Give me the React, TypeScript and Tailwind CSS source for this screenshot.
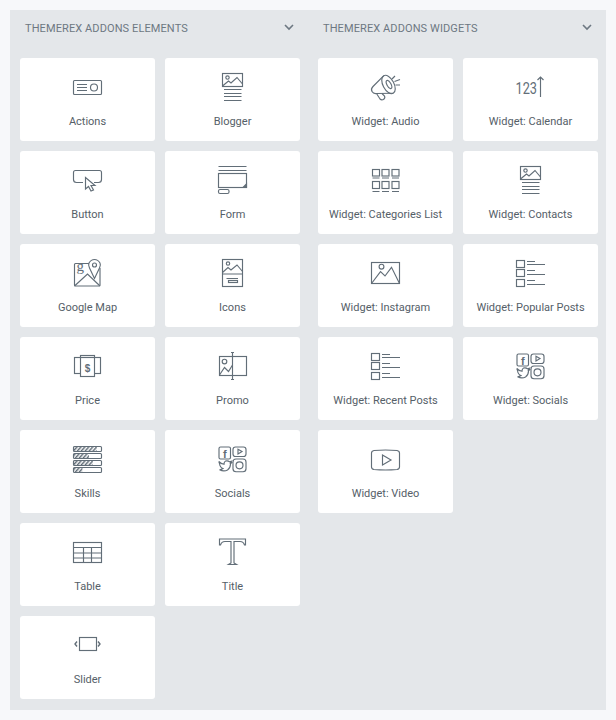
import type { ReactNode } from "react";

const stroke = "#626e78";

function Svg({ children }: { children: ReactNode }) {
  return (
    <svg width="41" height="40" viewBox="0 0 41 40" fill="none" stroke={stroke} strokeWidth="1.15">
      {children}
    </svg>
  );
}

function Lines({ ys, x1, x2 }: { ys: number[]; x1: number; x2: number }) {
  return (
    <path d={ys.map((y) => `M${x1} ${y}H${x2}`).join("")} />
  );
}

const IconActions = () => (
  <Svg>
    <rect x="6.5" y="13.5" width="28" height="14" rx="1" />
    <Lines ys={[17.5, 20.5, 23.5]} x1={10} x2={20} />
    <circle cx="27" cy="20.5" r="3.5" />
  </Svg>
);

const IconPictureText = () => (
  <Svg>
    <rect x="10.5" y="6.5" width="20" height="13" />
    <circle cx="15.5" cy="10.5" r="1.7" />
    <path d="M10.5 19L16.5 14L19 16L25 10.5L30.5 17" />
    <Lines ys={[22.5, 26.5, 29.5, 33.5]} x1={12} x2={29.5} />
  </Svg>
);

const IconButton = () => (
  <Svg>
    <path d="M16 22.5H9.5Q6.5 22.5 6.5 19.5V12.5Q6.5 10.5 8.5 10.5H32.5Q34.5 10.5 34.5 12.5V19.5Q34.5 22.5 31.5 22.5H27" />
    <path d="M18.5 17.5V29L21.5 26.5L24 31L26.5 30L24 25.5H28Z" />
  </Svg>
);

const IconForm = () => (
  <Svg>
    <Lines ys={[6.5, 10.5]} x1={6.5} x2={34.5} />
    <rect x="6.5" y="13.5" width="28" height="14" />
    <path d="M34.5 24V27.5H31Z" fill={stroke} />
    <rect x="6.5" y="29.5" width="10.5" height="4" rx="1.5" />
  </Svg>
);

const IconMap = () => (
  <Svg>
    <path d="M22 10.5H8.5Q7.5 10.5 7.5 11.5V32Q7.5 33 8.5 33H32Q33 33 33 32V15" />
    <path d="M7.5 33L20.5 21L33 33" />
    <path d="M27.5 25.5L22.5 15Q21 12 22 10Q24 6.5 27.5 6.5Q31 6.5 33 10Q34 12 32.5 15Z" fill="#fff" />
    <circle cx="27.5" cy="12" r="2" />
    <text x="9.5" y="18" fontFamily="'Liberation Serif', serif" fontSize="15" fill={stroke} stroke="none">g</text>
  </Svg>
);

const IconIcons = () => (
  <Svg>
    <rect x="10.5" y="6.5" width="20" height="27" />
    <circle cx="16" cy="10.5" r="1.7" />
    <path d="M10.5 19.5L16 14.5L19 17L25 12L30.5 18.5" />
    <path d="M10.5 21H30.5M14.5 25.5H26" />
    <rect x="16.5" y="27.5" width="9" height="2" />
  </Svg>
);

const IconPrice = () => (
  <Svg>
    <rect x="7.5" y="11.5" width="26" height="16" />
    <rect x="13.5" y="9.5" width="14" height="21" fill="#fff" />
    <path d="M13.5 11.5H27.5" />
    <text x="20.5" y="26" textAnchor="middle" fontFamily="'Liberation Sans', sans-serif" fontSize="10" fontWeight="700" fill={stroke} stroke="none">$</text>
  </Svg>
);

const IconPromo = () => (
  <Svg>
    <rect x="7.5" y="10.5" width="27" height="19" />
    <circle cx="12.5" cy="15.5" r="2.3" />
    <path d="M7.5 29L12.5 21.5L16.5 25.5L20.5 19" />
    <path d="M20.5 6.5V33.5M19 6.5H22M19 33.5H22" />
  </Svg>
);

const skills = [
  [7.5, 30],
  [14.5, 22],
  [21.5, 26],
  [28.5, 15.5],
];

const IconSkills = () => (
  <Svg>
    <defs>
      <pattern id="hatch" width="3" height="3" patternUnits="userSpaceOnUse" patternTransform="rotate(40)">
        <rect width="1.5" height="3" fill={stroke} stroke="none" />
      </pattern>
    </defs>
    {skills.map(([y, x2]) => (
      <g key={y}>
        <rect x="6.5" y={y} width={x2 - 6.5} height="5" fill="url(#hatch)" stroke="none" />
        <rect x="6.5" y={y} width="28" height="5" rx="1" />
      </g>
    ))}
  </Svg>
);

const IconSocials = () => (
  <Svg>
    <rect x="7" y="8" width="11.5" height="12" rx="1.5" />
    <text x="12.8" y="18.8" textAnchor="middle" fontFamily="'Liberation Sans', sans-serif" fontSize="11" fontWeight="700" fill={stroke} stroke="none">f</text>
    <rect x="21" y="8" width="13" height="9.5" rx="2.5" />
    <path d="M26 10.2V15L30 12.6Z" />
    <path d="M6.8 22.5Q9 25 12 25.3Q12 22 15 21.8Q16.5 21.8 17.5 22.8L19.5 22.2L18.5 24L19.5 23.8L18.5 25Q18.5 29 15.5 31Q12 33 7.5 30.8Q9.5 30.8 11 29.5Q8 28.5 7.5 24.5Z" />
    <rect x="21" y="20" width="13" height="12.7" rx="3" />
    <circle cx="27.5" cy="26.3" r="3.5" />
  </Svg>
);

const IconTable = () => (
  <Svg>
    <rect x="6.5" y="10.5" width="28" height="20" />
    <path d="M6.5 15.5H34.5M6.5 21H34.5M6.5 26H34.5M16.5 15.5V30.5M24.5 15.5V30.5" />
  </Svg>
);

const IconTitle = () => (
  <Svg>
    <path d="M7.5 7H33.5V13H32.5Q31.5 9.5 28 9.5H22V31L24.5 32.5H16.5L19 31V9.5H13Q9.5 9.5 8.5 13H7.5Z" />
  </Svg>
);

const IconSlider = () => (
  <Svg>
    <rect x="12.5" y="12.5" width="17" height="13" />
    <path d="M10 16.5L8 19L10 21.5M31 16.5L33 19L31 21.5" strokeWidth="1.4" />
  </Svg>
);

const IconAudio = () => (
  <Svg>
    <ellipse cx="23.5" cy="17.5" rx="5.5" ry="10" transform="rotate(-28 23.5 17.5)" />
    <ellipse cx="24" cy="17.5" rx="2" ry="4.5" transform="rotate(-28 24 17.5)" />
    <path d="M18.8 8.7L8 19.5Q5.5 22 7 24.5Q8.5 27 11.5 26.5L28.2 26.3" />
    <path d="M11.5 26.5L15 32Q16.5 33.5 18.5 32.5Q20.5 31 19.5 29L17 26.5" />
    <path d="M27 12L30 9M29.5 14.5L35 12.5M30.5 18H35" />
  </Svg>
);

const IconCalendar = () => (
  <Svg>
    <text x="5.5" y="26.5" fontFamily="Roboto, sans-serif" fontSize="16" textLength="21.5" lengthAdjust="spacingAndGlyphs" fill={stroke} stroke="none">123</text>
    <path d="M30.5 10V30M27.5 13L30.5 10L33.5 13" />
  </Svg>
);

const IconCategories = () => (
  <Svg>
    {[7.5, 17, 27].map((x) => (
      <g key={x}>
        <rect x={x} y="9.5" width="7" height="6.5" />
        <rect x={x} y="21.5" width="7" height="7" />
        <path d={`M${x} 18H${x + 7}M${x} 31.5H${x + 7}`} />
      </g>
    ))}
  </Svg>
);

const IconInstagram = () => (
  <Svg>
    <rect x="6.5" y="9.5" width="28" height="21" />
    <circle cx="16.5" cy="13.7" r="2.4" />
    <path d="M6.5 30.5L15.5 18.7L20 23L26.5 14.3L34.5 30.5" />
  </Svg>
);

const IconPosts = () => (
  <Svg>
    <rect x="6.5" y="7.5" width="8" height="7" />
    <rect x="6.5" y="16.5" width="8" height="7" />
    <rect x="6.5" y="26.5" width="8" height="7" />
    <Lines ys={[8.5, 17.5, 27.5]} x1={17} x2={25} />
    <Lines ys={[11.5, 21.5, 31.5]} x1={17} x2={35} />
  </Svg>
);

const IconVideo = () => (
  <Svg>
    <path d="M9 11.5Q20.5 10.5 32 11.5Q34.5 12 34.5 14V28Q34.5 30 32 30.5Q20.5 31.5 9 30.5Q6.5 30 6.5 28V14Q6.5 12 9 11.5Z" />
    <path d="M17.5 16V26L26 21Z" />
  </Svg>
);

const elements = [
  { label: "Actions", icon: <IconActions /> },
  { label: "Blogger", icon: <IconPictureText /> },
  { label: "Button", icon: <IconButton /> },
  { label: "Form", icon: <IconForm /> },
  { label: "Google Map", icon: <IconMap /> },
  { label: "Icons", icon: <IconIcons /> },
  { label: "Price", icon: <IconPrice /> },
  { label: "Promo", icon: <IconPromo /> },
  { label: "Skills", icon: <IconSkills /> },
  { label: "Socials", icon: <IconSocials /> },
  { label: "Table", icon: <IconTable /> },
  { label: "Title", icon: <IconTitle /> },
  { label: "Slider", icon: <IconSlider /> },
];

const widgets = [
  { label: "Widget: Audio", icon: <IconAudio /> },
  { label: "Widget: Calendar", icon: <IconCalendar /> },
  { label: "Widget: Categories List", icon: <IconCategories /> },
  { label: "Widget: Contacts", icon: <IconPictureText /> },
  { label: "Widget: Instagram", icon: <IconInstagram /> },
  { label: "Widget: Popular Posts", icon: <IconPosts /> },
  { label: "Widget: Recent Posts", icon: <IconPosts /> },
  { label: "Widget: Socials", icon: <IconSocials /> },
  { label: "Widget: Video", icon: <IconVideo /> },
];

function Section({ title, items }: { title: string; items: { label: string; icon: ReactNode }[] }) {
  return (
    <div className="w-[298px] pl-[10px] pr-2">
      <div className="mb-[10px] flex h-[38px] items-center justify-between pl-[5px] pr-[5px]">
        <span className="text-[11px] uppercase tracking-[0.1px] text-[#6d7882]">{title}</span>
        <svg className="-mt-[4px]" width="12" height="12" viewBox="0 0 12 12" fill="none" stroke="#6d7882" strokeWidth="1.6">
          <path d="M2 4L6 8L10 4" />
        </svg>
      </div>
      <div className="grid grid-cols-[135px_135px] gap-[10px]">
        {items.map((item) => (
          <div key={item.label} className="flex h-[83px] flex-col items-center rounded-[3px] bg-white pt-[9px]">
            {item.icon}
            <span className="mt-[8px] text-[11px] leading-[14px] text-[#556068]">{item.label}</span>
          </div>
        ))}
      </div>
    </div>
  );
}

export default function App() {
  return (
    <div className="h-[720px] w-[616px] bg-[#f7f8fa] p-[10px] font-['Roboto',sans-serif]">
      <div className="flex h-[700px] w-[596px] bg-[#e4e7ea]">
        <Section title="ThemeRex Addons Elements" items={elements} />
        <Section title="ThemeRex Addons Widgets" items={widgets} />
      </div>
    </div>
  );
}
